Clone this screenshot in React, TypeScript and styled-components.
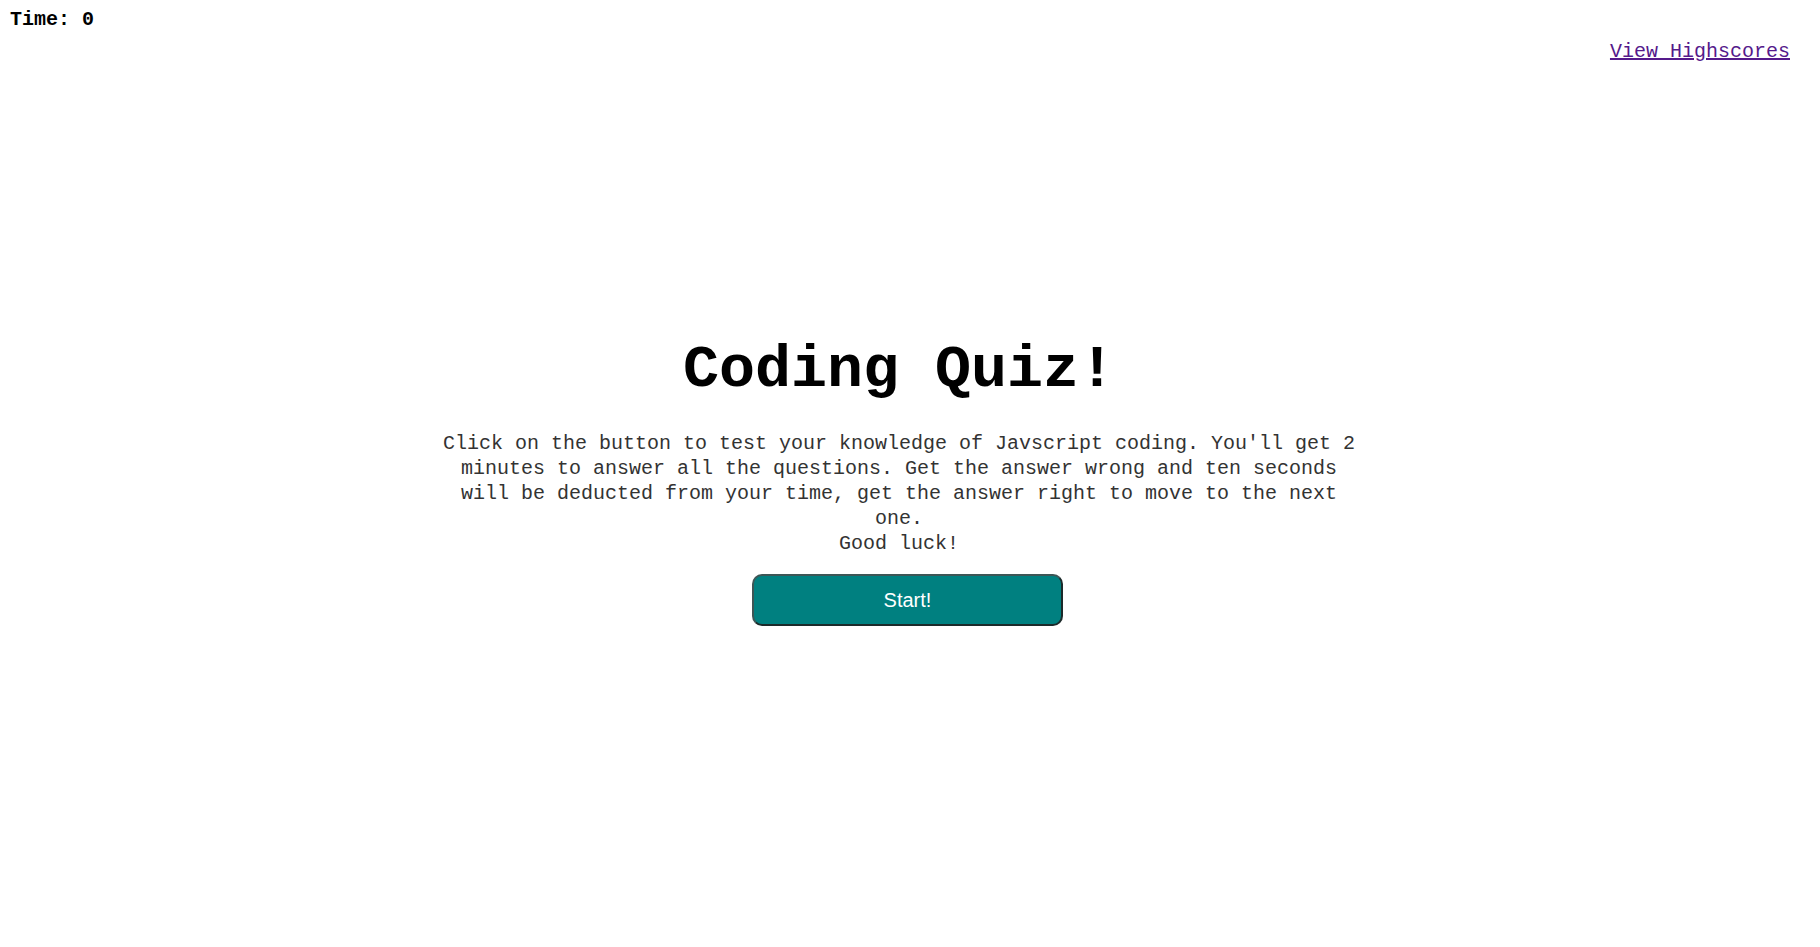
import styled, { createGlobalStyle } from "styled-components";

const GlobalStyle = createGlobalStyle`
    body {
        margin: 8px;
        background: #ffffff;
        font-family: "Liberation Mono", "Courier New", monospace;
        color: #000000;
    }
`

const App = () => {
    return (
        <>
            <GlobalStyle />
            <Header>
                <Timer>Time: <span>0</span></Timer>
                <HighscoreRow>
                    <HighscoreLink href="#highscores">View Highscores</HighscoreLink>
                </HighscoreRow>
            </Header>
            <Main>
                <Title>Coding Quiz!</Title>
                <Intro>
                    Click on the button to test your knowledge of Javscript coding. You'll get 2 minutes to answer all the questions. Get the answer wrong and ten seconds will be deducted from your time, get the answer right to move to the next one.
                    <br />
                    Good luck!
                </Intro>
                <StartButton type="button">Start!</StartButton>
            </Main>
        </>
    )
}

export default App;

const Header = styled.header`
    display: flex;
    flex-direction: column;
`

const Timer = styled.div`
    padding-left: 2px;
    font-size: 20px;
    font-weight: 700;
    line-height: 23px;
`

const HighscoreRow = styled.div`
    display: flex;
    justify-content: flex-end;
    margin-top: 9px;
    padding-right: 22px;
`

const HighscoreLink = styled.a`
    font-size: 20px;
    line-height: 23px;
    color: #551a8b;
    text-decoration: underline;
`

const Main = styled.main`
    display: flex;
    flex-direction: column;
    align-items: center;
    margin-top: 273px;
`

const Title = styled.h1`
    margin: 0 22px 0 0;
    font-size: 60px;
    line-height: 68px;
    font-weight: 700;
    text-align: center;
`

const Intro = styled.p`
    width: 920px;
    margin: 27px 22px 0 0;
    font-size: 20px;
    line-height: 25px;
    text-align: center;
    color: #333333;
`

const StartButton = styled.button`
    width: 311px;
    height: 52px;
    margin-top: 18px;
    margin-left: -5px;
    background-color: #008080;
    color: #ffffff;
    font-family: "Liberation Sans", Arial, sans-serif;
    font-size: 20px;
    border: 2px solid #3d5656;
    border-right-color: #1c2a2a;
    border-bottom-color: #1c2a2a;
    border-radius: 10px;
    cursor: pointer;
`
